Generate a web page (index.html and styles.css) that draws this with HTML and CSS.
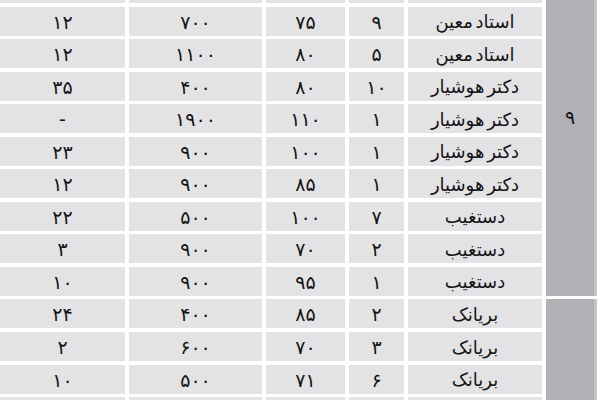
FILE: index.html
```html
<!DOCTYPE html>
<html lang="fa">
<head>
<meta charset="utf-8">
<link rel="stylesheet" href="styles.css">
</head>
<body>
<div class="table" dir="rtl">
  <div class="group g1"><span class="glabel">۹</span></div>
  <div class="group g2"></div>

  <div class="cell part"></div><div class="cell part"></div><div class="cell part"></div><div class="cell part"></div><div class="cell part"></div>

  <div class="cell name">استاد معین</div><div class="cell">۹</div><div class="cell">۷۵</div><div class="cell">۷۰۰</div><div class="cell">۱۲</div>
  <div class="cell name">استاد معین</div><div class="cell">۵</div><div class="cell">۸۰</div><div class="cell">۱۱۰۰</div><div class="cell">۱۲</div>
  <div class="cell name">دکتر هوشیار</div><div class="cell">۱۰</div><div class="cell">۸۰</div><div class="cell">۴۰۰</div><div class="cell">۳۵</div>
  <div class="cell name">دکتر هوشیار</div><div class="cell">۱</div><div class="cell">۱۱۰</div><div class="cell">۱۹۰۰</div><div class="cell">-</div>
  <div class="cell name">دکتر هوشیار</div><div class="cell">۱</div><div class="cell">۱۰۰</div><div class="cell">۹۰۰</div><div class="cell">۲۳</div>
  <div class="cell name">دکتر هوشیار</div><div class="cell">۱</div><div class="cell">۸۵</div><div class="cell">۹۰۰</div><div class="cell">۱۲</div>
  <div class="cell name">دستغیب</div><div class="cell">۷</div><div class="cell">۱۰۰</div><div class="cell">۵۰۰</div><div class="cell">۲۲</div>
  <div class="cell name">دستغیب</div><div class="cell">۲</div><div class="cell">۷۰</div><div class="cell">۹۰۰</div><div class="cell">۳</div>
  <div class="cell name">دستغیب</div><div class="cell">۱</div><div class="cell">۹۵</div><div class="cell">۹۰۰</div><div class="cell">۱۰</div>
  <div class="cell name">بریانک</div><div class="cell">۲</div><div class="cell">۸۵</div><div class="cell">۴۰۰</div><div class="cell">۲۴</div>
  <div class="cell name">بریانک</div><div class="cell">۳</div><div class="cell">۷۰</div><div class="cell">۶۰۰</div><div class="cell">۲</div>
  <div class="cell name">بریانک</div><div class="cell">۶</div><div class="cell">۷۱</div><div class="cell">۵۰۰</div><div class="cell">۱۰</div>

  <div class="cell part"></div><div class="cell part"></div><div class="cell part"></div><div class="cell part"></div><div class="cell part"></div>
</div>
</body>
</html>
```

FILE: styles.css
```css
html, body {
  margin: 0;
  padding: 0;
  background: #ffffff;
}
body {
  width: 600px;
  height: 400px;
  overflow: hidden;
}
.table {
  width: 597px;
  display: grid;
  grid-template-columns: 51px 134px 55px 79px 133px 125px;
  grid-template-rows: 3px repeat(12, 29px) 20px;
  column-gap: 4px;
  row-gap: 3.55px;
  font-family: "DejaVu Sans", sans-serif;
  font-size: 19px;
  color: #141414;
}
.cell {
  background: #e3e3e5;
  display: flex;
  align-items: center;
  justify-content: center;
  line-height: 1;
  white-space: nowrap;
  overflow: hidden;
  padding-top: 2px;
  box-sizing: border-box;
}
.name {
  font-size: 18px;
  word-spacing: -3px;
}
.group {
  grid-column: 1;
  background: #b0b1b5;
  border-right: 3px solid #c4c5c8;
  display: flex;
  align-items: center;
  justify-content: center;
}
.g1 {
  grid-row: 1 / span 10;
  padding-bottom: 62px;
}
.g2 {
  grid-row: 11 / span 4;
}
.glabel {
  font-size: 19px;
}
```
